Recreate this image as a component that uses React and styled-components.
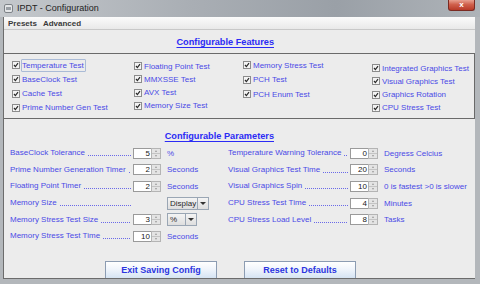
import React from 'react';
import styled, { createGlobalStyle } from 'styled-components';

const GlobalStyle = createGlobalStyle`
  html, body {
    margin: 0;
    padding: 0;
    background: #ececec;
  }
  body {
    font-family: "Liberation Sans", Arial, sans-serif;
  }
`;

const Window = styled.div`
  width: 480px;
  height: 284px;
  display: flex;
  flex-direction: column;
  background: #aab0b6;
  overflow: hidden;
`;

const TitleBar = styled.div`
  height: 17px;
  display: flex;
  align-items: flex-start;
  background: linear-gradient(to right, #c4c8cc 0%, #a9aeb4 40%, #9aa0a7 70%, #aeb3b8 100%);
`;

const TitleIcon = styled.svg`
  margin: 4px 0 0 4px;
`;

const TitleText = styled.span`
  margin: 3px 0 0 4px;
  font-size: 9px;
  color: #1e1e1e;
  line-height: 10px;
`;

const CloseButton = styled.div`
  margin-left: auto;
  margin-right: 5px;
  width: 25px;
  height: 10px;
  border: 1px solid #7a2a22;
  border-top: none;
  border-radius: 0 0 3px 3px;
  background: linear-gradient(to bottom, #e8a090 0%, #d0604c 45%, #b83a28 100%);
  color: #fff;
  font-size: 8px;
  font-weight: bold;
  line-height: 9px;
  text-align: center;
`;

const Frame = styled.div`
  flex: 1;
  display: flex;
  flex-direction: column;
  padding: 0 5px 5px 3px;
  background: #b3b7bb;
`;

const Inner = styled.div`
  flex: 1;
  display: flex;
  flex-direction: column;
  background: #ececec;
  border-left: 1px solid #6c6c6c;
  border-bottom: 1px solid #6c6c6c;
`;

const MenuBar = styled.div`
  height: 12px;
  display: flex;
  gap: 6px;
  padding-left: 4px;
  align-items: center;
  background: linear-gradient(to bottom, #fbfbfb, #e9e9e9);
  border-bottom: 1px solid #c8c8c8;
`;

const MenuItem = styled.span`
  font-size: 8px;
  font-weight: bold;
  color: #3a3a3a;
`;

const Heading = styled.div`
  margin-top: ${({ top }) => top}px;
  padding-right: 201px;
  text-align: right;
  font-size: 9.2px;
  line-height: 13px;
  font-weight: bold;
  color: #2b2bf5;
  span {
    text-decoration: underline;
    text-underline-offset: 2px;
  }
`;

const FeatureBox = styled.div`
  margin-top: 4px;
  height: 64px;
  border: 1px solid #6a6a6a;
  border-left: none;
  display: grid;
  grid-template-columns: 122px 109px 129px 1fr;
  padding-left: 8px;
`;

const FeatureColumn = styled.div`
  display: flex;
  flex-direction: column;
  padding-top: ${({ top }) => top}px;
  gap: ${({ gap }) => gap}px;
`;

const CheckItem = styled.div`
  height: 12px;
  display: flex;
  align-items: center;
  gap: 1px;
`;

const CheckLabel = styled.span`
  font-size: 8px;
  color: #4a4ae6;
  white-space: nowrap;
  padding: 1px 1px 1px 0;
  border: 1px solid ${({ focused }) => (focused ? '#aabbd6' : 'transparent')};
  border-radius: 1px;
`;

const Box = styled.svg`
  flex: none;
`;

const Check = ({ label, focused }) => (
  <CheckItem>
    <Box width="8" height="8" viewBox="0 0 8 8">
      <rect x="0.5" y="0.5" width="7" height="7" fill="#f4f4f4" stroke="#8c8c8c" />
      <path d="M2 4 L3.4 5.6 L6 2.2" fill="none" stroke="#2a2a2a" strokeWidth="1.2" />
    </Box>
    <CheckLabel focused={focused}>{label}</CheckLabel>
  </CheckItem>
);

const ParamsGrid = styled.div`
  margin-top: 2px;
  display: grid;
  grid-template-columns: 123px 28px 67px 122px 29px 1fr;
  grid-auto-rows: 16.6px;
  align-items: center;
  padding-left: 6px;
`;

const LabelCell = styled.div`
  display: flex;
  align-items: flex-end;
  white-space: nowrap;
  font-size: 8px;
  line-height: 10px;
  color: #4a4ae6;
  padding-right: 2px;
`;

const Dots = styled.span`
  flex: 1;
  height: 1px;
  margin: 0 0 2px 3px;
  background: repeating-linear-gradient(to right, #6a6ae8 0 1px, transparent 1px 2px);
`;

const UnitCell = styled.div`
  display: flex;
  align-items: center;
  padding-left: ${({ pad }) => pad ?? 6}px;
  font-size: 8px;
  color: #4a4ae6;
  white-space: nowrap;
`;

const SpinnerWrap = styled.div`
  display: flex;
  height: 11px;
  width: 28px;
`;

const SpinField = styled.div`
  flex: 1;
  background: #fff;
  border: 1px solid #9a9a9a;
  border-right: none;
  font-size: 8px;
  line-height: 10px;
  text-align: right;
  padding-right: 1px;
  color: #202020;
`;

const SpinArrows = styled.div`
  width: 8px;
  display: flex;
  flex-direction: column;
  border: 1px solid #b4b4b4;
  background: #e4e4e4;
`;

const SpinHalf = styled.div`
  flex: 1;
  display: flex;
  align-items: center;
  justify-content: center;
  & + & {
    border-top: 1px solid #c4c4c4;
  }
  &::after {
    content: '';
    border-left: 1.5px solid transparent;
    border-right: 1.5px solid transparent;
    ${({ down }) => (down ? 'border-top: 2px solid #999;' : 'border-bottom: 2px solid #999;')}
  }
`;

const Spinner = ({ value }) => (
  <SpinnerWrap>
    <SpinField>{value}</SpinField>
    <SpinArrows>
      <SpinHalf />
      <SpinHalf down />
    </SpinArrows>
  </SpinnerWrap>
);

const Select = styled.div`
  display: flex;
  width: ${({ w }) => w}px;
  height: 11px;
  border: 1px solid #9aa6b4;
  background: linear-gradient(to bottom, #f4f4f4, #dedede);
  font-size: 8px;
  color: #2a2a2a;
`;

const SelectText = styled.span`
  flex: 1;
  padding-left: 2px;
  line-height: 11px;
`;

const SelectArrow = styled.span`
  width: 10px;
  border-left: 1px solid #9aa6b4;
  display: flex;
  align-items: center;
  justify-content: center;
  &::after {
    content: '';
    border-left: 3px solid transparent;
    border-right: 3px solid transparent;
    border-top: 3px solid #333;
  }
`;

const Dropdown = ({ value, w }) => (
  <Select w={w}>
    <SelectText>{value}</SelectText>
    <SelectArrow />
  </Select>
);

const ButtonRow = styled.div`
  margin-top: auto;
  display: flex;
  gap: 27px;
  padding-left: 101px;
`;

const Button = styled.div`
  width: 110px;
  height: 16px;
  border: 1px solid #8c9cb2;
  border-bottom: none;
  background: linear-gradient(to bottom, #ffffff 0%, #f0f5fb 45%, #d6e4f3 100%);
  font-size: 9px;
  font-weight: bold;
  color: #2b35e0;
  text-align: center;
  line-height: 16px;
`;

const Label = ({ children }) => (
  <LabelCell>
    {children}
    <Dots />
  </LabelCell>
);

const App = () => {
  return (
    <>
      <GlobalStyle />
      <Window>
        <TitleBar>
          <TitleIcon width="9" height="9" viewBox="0 0 9 9">
            <rect x="0.5" y="0.5" width="8" height="8" rx="1.5" fill="#e4e6e8" stroke="#7e8388" />
            <rect x="2" y="3" width="5" height="3" fill="#9aa0a6" />
          </TitleIcon>
          <TitleText>IPDT - Configuration</TitleText>
          <CloseButton>x</CloseButton>
        </TitleBar>
        <Frame>
          <Inner>
            <MenuBar>
              <MenuItem>Presets</MenuItem>
              <MenuItem>Advanced</MenuItem>
            </MenuBar>
            <Heading top={6}>
              <span>Configurable Features</span>
            </Heading>
            <FeatureBox>
              <FeatureColumn top={5} gap={2.3}>
                <Check label="Temperature Test" focused />
                <Check label="BaseClock Test" />
                <Check label="Cache Test" />
                <Check label="Prime Number Gen Test" />
              </FeatureColumn>
              <FeatureColumn top={6} gap={1.3}>
                <Check label="Floating Point Test" />
                <Check label="MMXSSE Test" />
                <Check label="AVX Test" />
                <Check label="Memory Size Test" />
              </FeatureColumn>
              <FeatureColumn top={5} gap={2.5}>
                <Check label="Memory Stress Test" />
                <Check label="PCH Test" />
                <Check label="PCH Enum Test" />
              </FeatureColumn>
              <FeatureColumn top={8} gap={1.3}>
                <Check label="Integrated Graphics Test" />
                <Check label="Visual Graphics Test" />
                <Check label="Graphics Rotation" />
                <Check label="CPU Stress Test" />
              </FeatureColumn>
            </FeatureBox>
            <Heading top={11}>
              <span>Configurable Parameters</span>
            </Heading>
            <ParamsGrid>
              <Label>BaseClock Tolerance</Label>
              <Spinner value="5" />
              <UnitCell>%</UnitCell>
              <Label>Temperature Warning Tolerance</Label>
              <Spinner value="0" />
              <UnitCell pad={5}>Degress Celcius</UnitCell>

              <Label>Prime Number Generation Timer</Label>
              <Spinner value="2" />
              <UnitCell>Seconds</UnitCell>
              <Label>Visual Graphics Test Time</Label>
              <Spinner value="20" />
              <UnitCell pad={5}>Seconds</UnitCell>

              <Label>Floating Point Timer</Label>
              <Spinner value="2" />
              <UnitCell>Seconds</UnitCell>
              <Label>Visual Graphics Spin</Label>
              <Spinner value="10" />
              <UnitCell pad={5}>0 is fastest &gt;0 is slower</UnitCell>

              <Label>Memory Size</Label>
              <span />
              <UnitCell>
                <Dropdown value="Display" w={40} />
              </UnitCell>
              <Label>CPU Stress Test Time</Label>
              <Spinner value="4" />
              <UnitCell pad={5}>Minutes</UnitCell>

              <Label>Memory Stress Test Size</Label>
              <Spinner value="3" />
              <UnitCell>
                <Dropdown value="%" w={28} />
              </UnitCell>
              <Label>CPU Stress Load Level</Label>
              <Spinner value="8" />
              <UnitCell pad={5}>Tasks</UnitCell>

              <Label>Memory Stress Test Time</Label>
              <Spinner value="10" />
              <UnitCell>Seconds</UnitCell>
            </ParamsGrid>
            <ButtonRow>
              <Button>Exit Saving Config</Button>
              <Button>Reset to Defaults</Button>
            </ButtonRow>
          </Inner>
        </Frame>
      </Window>
    </>
  );
};

export default App;
